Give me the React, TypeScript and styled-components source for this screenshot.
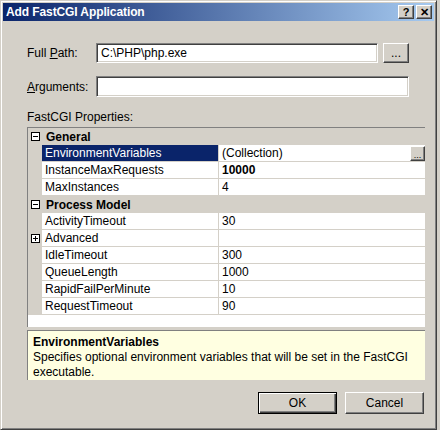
import styled, { createGlobalStyle } from "styled-components";

const GlobalStyle = createGlobalStyle`
  html, body {
    margin: 0;
    padding: 0;
    background: #d4d0c8;
  }
  body {
    font-family: "Liberation Sans", Arial, sans-serif;
    font-size: 11px;
    color: #000;
  }
`;

const Window = styled.div`
  box-sizing: border-box;
  width: 437px;
  height: 430px;
  background: #d4d0c8;
  border: 1px solid;
  border-color: #d4d0c8 #404040 #404040 #d4d0c8;
  box-shadow: inset 1px 1px 0 #fff, inset -1px -1px 0 #808080;
  padding: 2px;
  display: flex;
  flex-direction: column;
`;

const TitleBar = styled.div`
  height: 18px;
  display: flex;
  align-items: center;
  padding: 0 2px 0 3px;
  background: linear-gradient(to right, #0a246a, #a6caf0);
`;

const Title = styled.div`
  flex: 1;
  color: #fff;
  font-weight: bold;
  font-size: 12px;
  letter-spacing: -0.1px;
`;

const CaptionButton = styled.div`
  box-sizing: border-box;
  width: 16px;
  height: 14px;
  margin-left: 2px;
  background: #d4d0c8;
  border: 1px solid;
  border-color: #fff #404040 #404040 #fff;
  box-shadow: inset -1px -1px 0 #808080;
  display: flex;
  align-items: center;
  justify-content: center;
  font-weight: bold;
  font-size: 11px;
  line-height: 1;
`;

const Body = styled.div`
  flex: 1;
  display: flex;
  flex-direction: column;
  padding: 22px 9px 0 24px;
`;

const Form = styled.div`
  width: 382px;
  display: grid;
  grid-template-columns: 64px 282px 1fr;
  column-gap: 5px;
  row-gap: 13px;
  align-items: center;
`;

const FieldLabel = styled.label`
  font-size: 12px;
  white-space: nowrap;
  u {
    text-decoration: underline;
  }
`;

const TextBox = styled.div<{ $span?: number; $h?: number }>`
  box-sizing: border-box;
  grid-column: span ${(p) => p.$span ?? 1};
  height: ${(p) => p.$h ?? 20}px;
  background: #fff;
  border: 1px solid;
  border-color: #808080 #fff #fff #808080;
  box-shadow: inset 1px 1px 0 #404040, inset -1px -1px 0 #d4d0c8;
  display: flex;
  align-items: center;
  padding-left: 4px;
  font-size: 12px;
`;

const Button = styled.div<{ $default?: boolean; $w?: number; $h?: number }>`
  box-sizing: border-box;
  width: ${(p) => p.$w ?? 79}px;
  height: ${(p) => p.$h ?? 22}px;
  background: #d4d0c8;
  border: 1px solid;
  border-color: ${(p) =>
    p.$default ? "#000" : "#fff #404040 #404040 #fff"};
  box-shadow: ${(p) =>
    p.$default
      ? "inset 1px 1px 0 #fff, inset -1px -1px 0 #404040, inset -2px -2px 0 #808080"
      : "inset -1px -1px 0 #808080"};
  display: flex;
  align-items: center;
  justify-content: center;
  font-size: 12px;
`;

const BrowseButton = styled(Button)`
  font-size: 9px;
  align-items: flex-end;
  line-height: 10px;
`;

const SectionLabel = styled.div`
  margin-top: 14px;
  height: 13px;
  line-height: 13px;
  font-size: 12px;
`;

const Grid = styled.div`
  box-sizing: border-box;
  margin-top: 3px;
  width: 398px;
  height: 200px;
  border-top: 1px solid #808080;
  border-left: 1px solid #808080;
  background: #fff;
  display: flex;
  flex-direction: column;
`;

const Row = styled.div`
  display: grid;
  grid-template-columns: 14px 177px 1fr;
  height: 17px;
  background: #d4d0c8;
`;

const Gutter = styled.div`
  display: flex;
  align-items: center;
  justify-content: center;
  padding-left: 1px;
`;

const ExpandBox = styled.div<{ $plus?: boolean }>`
  box-sizing: border-box;
  width: 9px;
  height: 9px;
  border: 1px solid #000;
  background: #fff;
  position: relative;
  &::before {
    content: "";
    position: absolute;
    left: 1px;
    top: 3px;
    width: 5px;
    height: 1px;
    background: #000;
  }
  &::after {
    content: "";
    display: ${(p) => (p.$plus ? "block" : "none")};
    position: absolute;
    left: 3px;
    top: 1px;
    width: 1px;
    height: 5px;
    background: #000;
  }
`;

const CategoryName = styled.div`
  grid-column: span 2;
  display: flex;
  align-items: center;
  padding-left: 4px;
  font-weight: bold;
  font-size: 12px;
`;

const NameCell = styled.div<{ $selected?: boolean }>`
  display: flex;
  align-items: center;
  padding-left: 3px;
  border-bottom: 1px solid #d4d0c8;
  border-right: 1px solid #d4d0c8;
  background: ${(p) => (p.$selected ? "#0a246a" : "#fff")};
  color: ${(p) => (p.$selected ? "#fff" : "#000")};
  font-size: 12px;
`;

const ValueCell = styled.div<{ $bold?: boolean }>`
  display: flex;
  align-items: center;
  padding-left: 3px;
  border-bottom: 1px solid #d4d0c8;
  background: #fff;
  font-weight: ${(p) => (p.$bold ? "bold" : "normal")};
  font-size: 12px;
`;

const CellText = styled.span`
  flex: 1;
`;

const Filler = styled.div`
  flex: 1;
  background: #fff;
`;

const Description = styled.div`
  box-sizing: border-box;
  margin-top: 3px;
  width: 398px;
  height: 50px;
  background: #ffffe1;
  border-top: 1px solid #808080;
  border-left: 1px solid #808080;
  padding: 3px 5px;
  font-size: 12px;
  line-height: 15px;
`;

const DescTitle = styled.div`
  font-weight: bold;
  line-height: 16px;
`;

const Footer = styled.div`
  display: flex;
  justify-content: flex-end;
  gap: 8px;
  margin-top: 12px;
  width: 397px;
`;

type Prop = { name: string; value: string; bold?: boolean; selected?: boolean; browse?: boolean };
type Item = { category: string } | { expand: string } | Prop;

const items: Item[] = [
  { category: "General" },
  { name: "EnvironmentVariables", value: "(Collection)", selected: true, browse: true },
  { name: "InstanceMaxRequests", value: "10000", bold: true },
  { name: "MaxInstances", value: "4" },
  { category: "Process Model" },
  { name: "ActivityTimeout", value: "30" },
  { expand: "Advanced" },
  { name: "IdleTimeout", value: "300" },
  { name: "QueueLength", value: "1000" },
  { name: "RapidFailPerMinute", value: "10" },
  { name: "RequestTimeout", value: "90" },
];

const App = () => {
  return (
    <>
      <GlobalStyle />
      <Window>
        <TitleBar>
          <Title>Add FastCGI Application</Title>
          <CaptionButton>?</CaptionButton>
          <CaptionButton>✕</CaptionButton>
        </TitleBar>
        <Body>
          <Form>
            <FieldLabel>
              Full <u>P</u>ath:
            </FieldLabel>
            <TextBox>C:\PHP\php.exe</TextBox>
            <Button $w={26} $h={20}>...</Button>
            <FieldLabel>
              <u>A</u>rguments:
            </FieldLabel>
            <TextBox $span={2} $h={21} />
          </Form>
          <SectionLabel>FastCGI Properties:</SectionLabel>
          <Grid>
            {items.map((it, i) => {
              if ("category" in it) {
                return (
                  <Row key={i}>
                    <Gutter>
                      <ExpandBox />
                    </Gutter>
                    <CategoryName>{it.category}</CategoryName>
                  </Row>
                );
              }
              if ("expand" in it) {
                return (
                  <Row key={i}>
                    <Gutter>
                      <ExpandBox $plus />
                    </Gutter>
                    <NameCell>{it.expand}</NameCell>
                    <ValueCell />
                  </Row>
                );
              }
              return (
                <Row key={i}>
                  <Gutter />
                  <NameCell $selected={it.selected}>{it.name}</NameCell>
                  <ValueCell $bold={it.bold}>
                    <CellText>{it.value}</CellText>
                    {it.browse && (
                      <BrowseButton $w={15} $h={15}>
                        ...
                      </BrowseButton>
                    )}
                  </ValueCell>
                </Row>
              );
            })}
            <Filler />
          </Grid>
          <Description>
            <DescTitle>EnvironmentVariables</DescTitle>
            Specifies optional environment variables that will be set in the FastCGI
            <br />
            executable.
          </Description>
          <Footer>
            <Button $default>OK</Button>
            <Button>Cancel</Button>
          </Footer>
        </Body>
      </Window>
    </>
  );
};

export default App;
